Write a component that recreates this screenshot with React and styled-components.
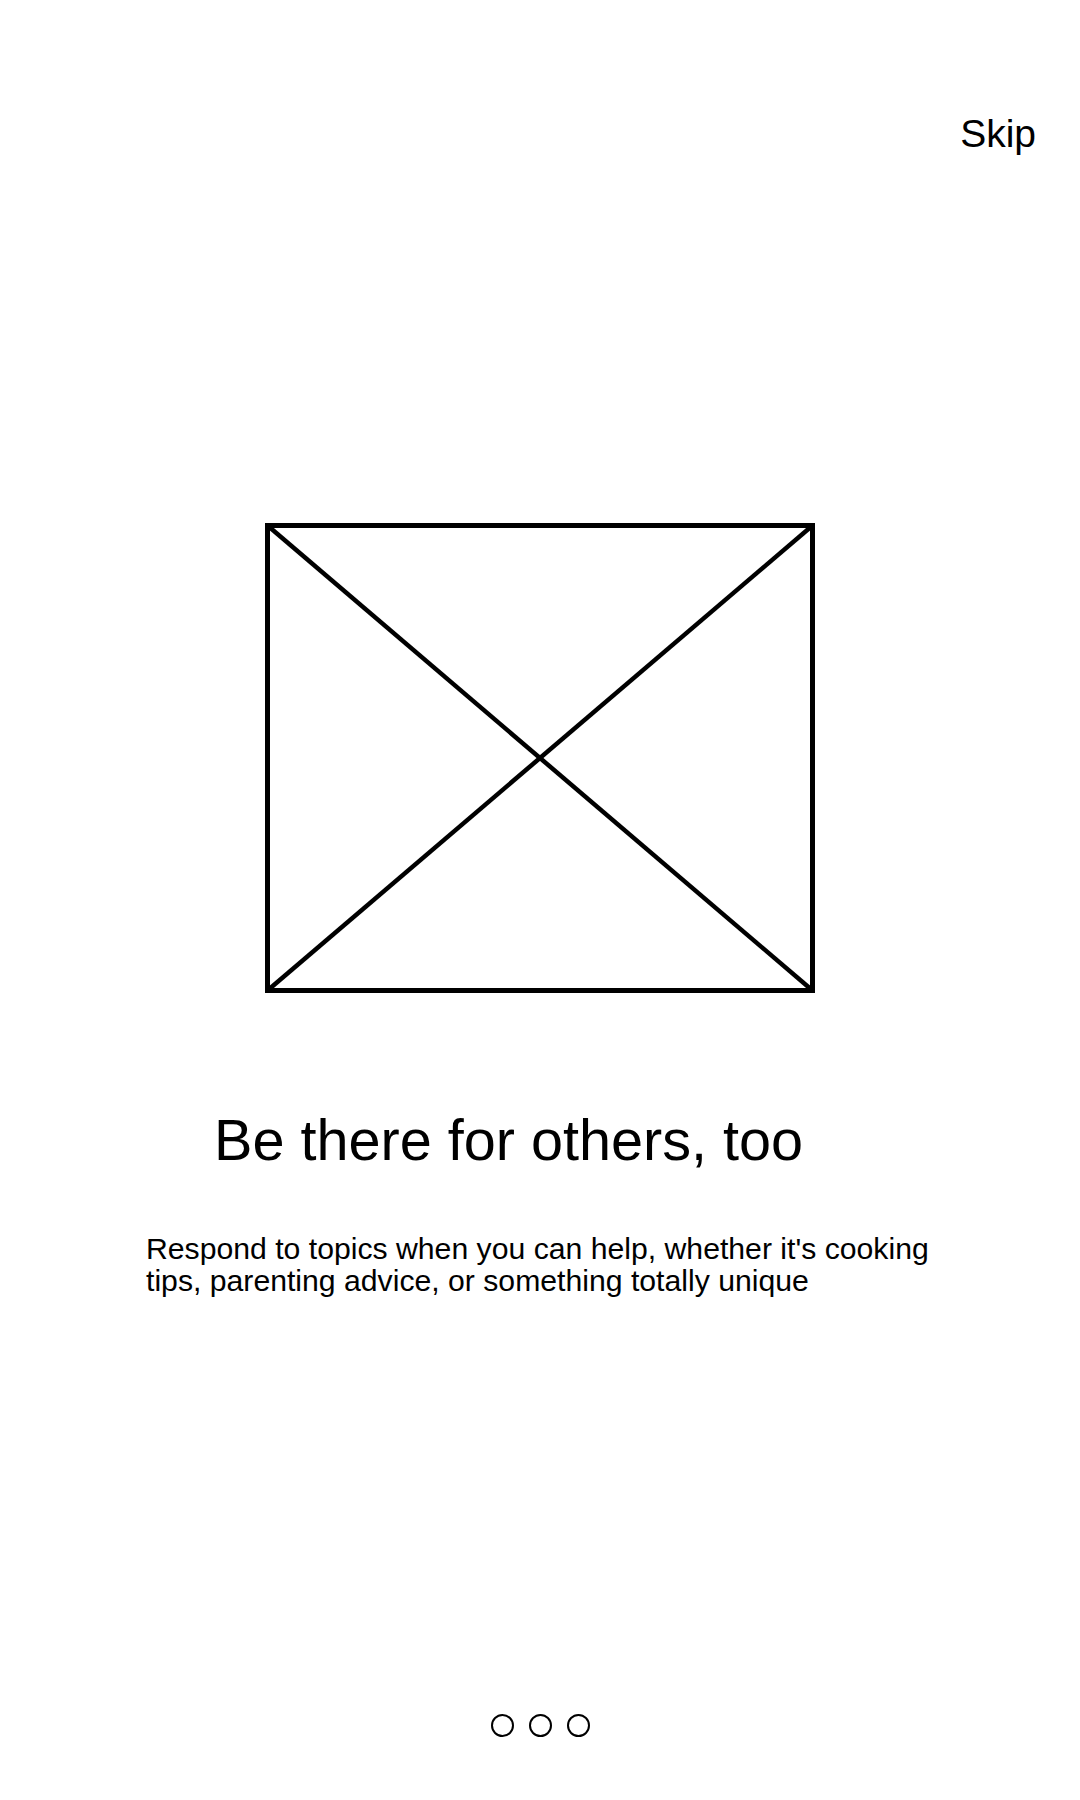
import React, { useState } from "react";
import styled, { createGlobalStyle } from "styled-components";

const GlobalStyle = createGlobalStyle`
  html, body {
    margin: 0;
    padding: 0;
    background: #ffffff;
  }
`;

const slides = [
  {
    title: "Be there for others, too",
    text: "Respond to topics when you can help, whether it's cooking tips, parenting advice, or something totally unique",
  },
];

const App = () => {
  const [active] = useState(0);
  const slide = slides[active];

  return (
    <Page>
      <GlobalStyle />
      <TopBar>
        <SkipButton type="button">Skip</SkipButton>
      </TopBar>
      <Placeholder viewBox="0 0 550 470" aria-hidden="true">
        <rect x="2.5" y="2.5" width="545" height="465" fill="none" stroke="#000" strokeWidth="5" />
        <line x1="2.5" y1="2.5" x2="547.5" y2="467.5" stroke="#000" strokeWidth="4.5" />
        <line x1="547.5" y1="2.5" x2="2.5" y2="467.5" stroke="#000" strokeWidth="4.5" />
      </Placeholder>
      <Title>{slide.title}</Title>
      <Description>{slide.text}</Description>
      <Dots>
        {[0, 1, 2].map((i) => (
          <Dot key={i} />
        ))}
      </Dots>
    </Page>
  );
};

const Page = styled.div`
  min-height: 1800px;
  display: flex;
  flex-direction: column;
  font-family: "Liberation Sans", Arial, sans-serif;
  color: #000;
  background: #fff;
  box-sizing: border-box;
`;

const TopBar = styled.div`
  display: flex;
  justify-content: flex-end;
  padding: 112px 44px 0;
`;

const SkipButton = styled.button`
  border: none;
  background: none;
  padding: 0;
  font-family: inherit;
  font-size: 39px;
  line-height: 43px;
  color: #000;
  cursor: pointer;
`;

const Placeholder = styled.svg`
  display: block;
  align-self: center;
  width: 550px;
  height: 470px;
  margin-top: 368px;
`;

const Title = styled.h1`
  margin: 114px 0 0;
  padding-left: 214px;
  font-size: 57.6px;
  line-height: 66px;
  font-weight: normal;
`;

const Description = styled.p`
  margin: 60px 0 0;
  padding-left: 146px;
  max-width: 800px;
  font-size: 30.2px;
  line-height: 32px;
`;

const Dots = styled.div`
  margin-top: auto;
  display: flex;
  justify-content: center;
  gap: 15px;
  padding-bottom: 63px;
`;

const Dot = styled.span`
  width: 23px;
  height: 23px;
  border: 2.5px solid #000;
  border-radius: 50%;
  box-sizing: border-box;
`;

export default App;
